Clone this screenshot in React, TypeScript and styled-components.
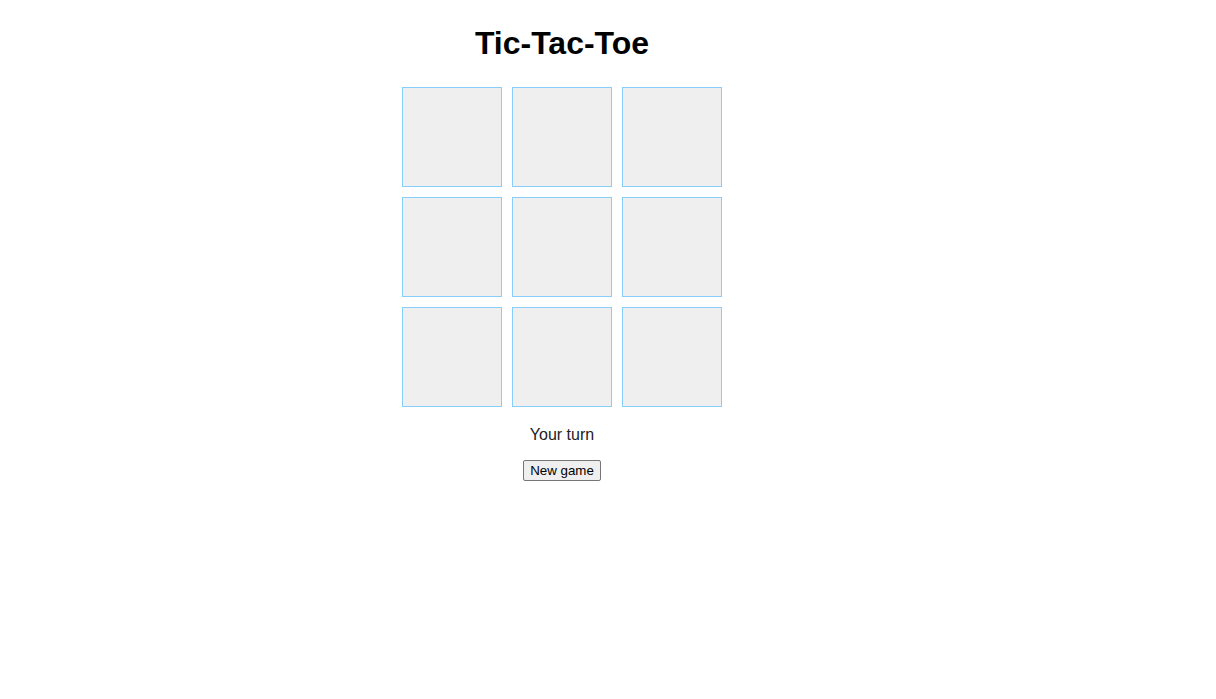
import React, { useState } from "react";
import styled, { createGlobalStyle } from "styled-components";

const Global = createGlobalStyle`
  html, body { margin: 0; padding: 0; background: #fff; }
  body { font-family: "Liberation Sans", Arial, sans-serif; }
`;

const Page = styled.div`
  width: 1124px;
  display: flex;
  flex-direction: column;
  align-items: center;
`;

const Title = styled.h1`
  margin: 25px 0 0;
  font-size: 32px;
  line-height: 37px;
  font-weight: bold;
  color: #000;
`;

const Board = styled.div`
  margin-top: 25px;
  display: grid;
  grid-template-columns: repeat(3, 100px);
  grid-auto-rows: 100px;
  gap: 10px;
`;

const Cell = styled.button`
  box-sizing: border-box;
  width: 100px;
  height: 100px;
  padding: 0;
  margin: 0;
  border: 1px solid #87cefa;
  border-radius: 0;
  background: #efefef;
  font-family: "Liberation Sans", Arial, sans-serif;
  font-size: 48px;
  font-weight: bold;
  color: #333;
  cursor: pointer;
`;

const Status = styled.div`
  margin-top: 19px;
  font-size: 16px;
  line-height: 18px;
  color: #222;
`;

const NewGame = styled.button`
  margin-top: 16px;
  box-sizing: border-box;
  height: 21px;
  padding: 1px 6px;
  font-family: "Liberation Sans", Arial, sans-serif;
  font-size: 13.333px;
  color: #000;
  background: #efefef;
  border: 1px solid #767676;
  border-radius: 2px;
`;

export default function App() {
  const [cells, setCells] = useState<string[]>(Array(9).fill(""));
  return (
    <>
      <Global />
      <Page>
        <Title>Tic-Tac-Toe</Title>
        <Board>
          {cells.map((c, i) => (
            <Cell
              key={i}
              onClick={() => {
                if (c) return;
                const next = cells.slice();
                next[i] = "X";
                setCells(next);
              }}
            >
              {c}
            </Cell>
          ))}
        </Board>
        <Status>Your turn</Status>
        <NewGame onClick={() => setCells(Array(9).fill(""))}>New game</NewGame>
      </Page>
    </>
  );
}
